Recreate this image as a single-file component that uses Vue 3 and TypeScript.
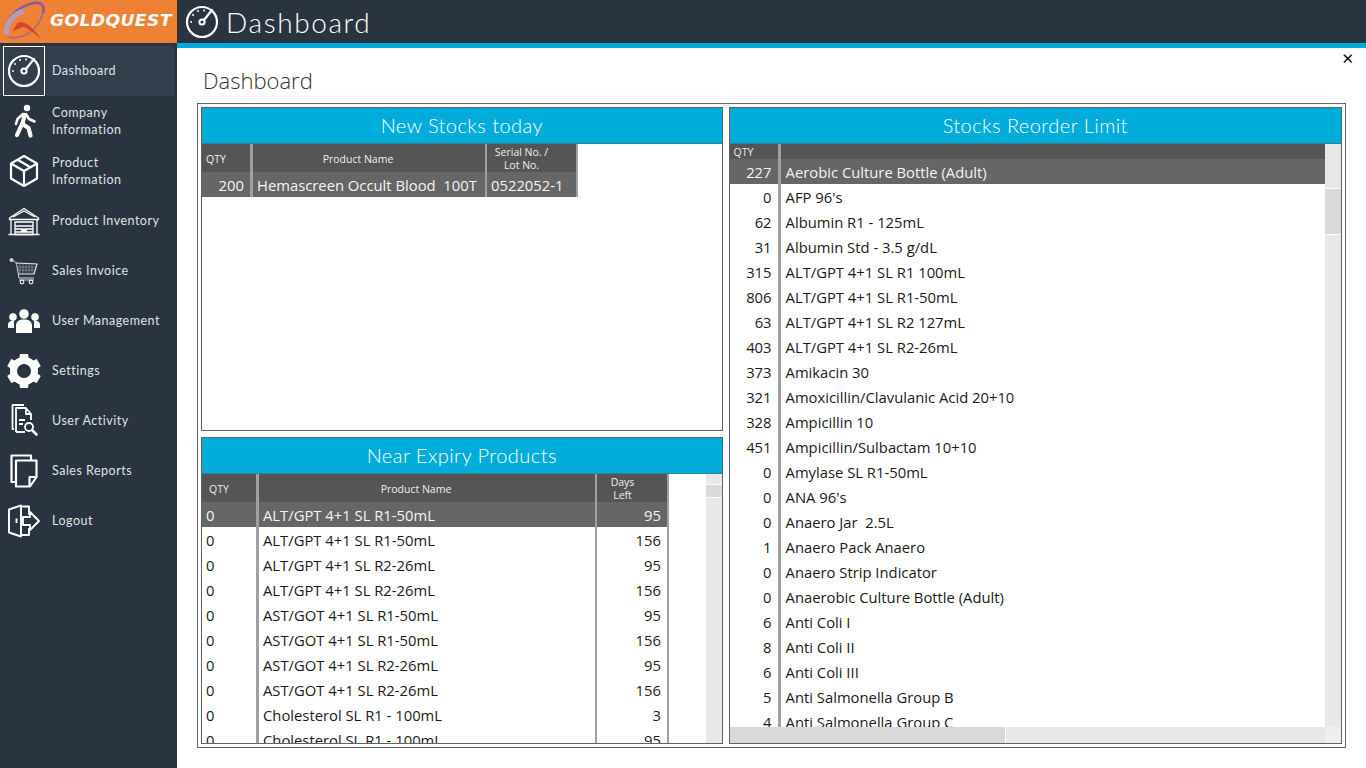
<template>
  <div class="app">
    <aside class="sidebar">
      <div class="logo">
        <svg class="logo-mark" viewBox="0 0 50 43">
          <path d="M7 35C1 24 16 6 34 3c8-1 11 3 9 10" fill="none" stroke="#8a5aa6" stroke-width="2.6" />
          <path d="M7 35C4 26 12 14 24 11" fill="none" stroke="#b79ab8" stroke-width="5" />
          <path d="M8 37c14 3 30-6 35-24" fill="none" stroke="#a56a8a" stroke-width="1.6" />
          <path d="M19 22c8 0 14 6 22 17-7-6-13-11-18-12-4 1-8 3-10 5 1-4 3-8 6-10z" fill="#d8452c" />
        </svg>
        <span class="logo-text">GOLDQUEST</span>
      </div>
      <nav class="menu">
        <div v-for="item in menu" :key="item.icon" class="menu-item" :class="{ active: item.icon === 'gauge' }">
          <svg class="menu-icon" viewBox="0 0 48 50" v-html="icons[item.icon]"></svg>
          <span class="menu-label" :class="{ single: !item.label.includes('\n') }">{{ item.label }}</span>
        </div>
      </nav>
    </aside>

    <div class="content">
      <header class="topbar">
        <svg class="top-icon" viewBox="0 0 48 50" v-html="icons.gauge"></svg>
        <span class="top-title">Dashboard</span>
      </header>

      <main class="main">
        <span class="close">✕</span>
        <h1 class="page-title">Dashboard</h1>
        <div class="frame">
          <div class="left-col">
            <section class="panel new-stocks">
              <div class="panel-head">New Stocks today</div>
              <div class="grid-wrap">
                <div class="grid">
                  <div class="row head">
                    <div class="cell c-qty tl">QTY</div>
                    <div class="cell c-name tc">Product Name</div>
                    <div class="cell c-lot tc">Serial No. /<br />Lot No.</div>
                  </div>
                  <div class="row selected">
                    <div class="cell c-qty tr">200</div>
                    <div class="cell c-name">{{ newStockName }}</div>
                    <div class="cell c-lot">0522052-1</div>
                  </div>
                </div>
              </div>
            </section>

            <section class="panel near-expiry">
              <div class="panel-head">Near Expiry Products</div>
              <div class="grid-wrap">
                <div class="grid">
                  <div class="row head">
                    <div class="cell c-qty tl">QTY</div>
                    <div class="cell c-name tc">Product Name</div>
                    <div class="cell c-days tc">Days<br />Left</div>
                  </div>
                  <div
                    v-for="(row, i) in nearExpiry"
                    :key="i"
                    class="row"
                    :class="{ selected: i === 0 }"
                  >
                    <div class="cell c-qty">0</div>
                    <div class="cell c-name">{{ row[0] }}</div>
                    <div class="cell c-days tr">{{ row[1] }}</div>
                  </div>
                </div>
                <div class="vscroll">
                  <div class="vthumb"></div>
                </div>
              </div>
            </section>
          </div>

          <section class="panel reorder">
            <div class="panel-head">Stocks Reorder Limit</div>
            <div class="grid-wrap">
              <div class="grid">
                <div class="row head">
                  <div class="cell c-qty tl">QTY</div>
                  <div class="cell c-name"></div>
                </div>
                <div
                  v-for="(row, i) in reorder"
                  :key="i"
                  class="row"
                  :class="{ selected: i === 0 }"
                >
                  <div class="cell c-qty tr">{{ row[0] }}</div>
                  <div class="cell c-name">{{ row[1] }}</div>
                </div>
              </div>
              <div class="vscroll">
                <div class="vthumb"></div>
              </div>
              <div class="hscroll">
                <div class="hthumb"></div>
              </div>
              <div class="corner"></div>
            </div>
          </section>
        </div>
      </main>
    </div>
  </div>
</template>

<script setup lang="ts">
const menu = [
  { icon: "gauge", label: "Dashboard" },
  { icon: "walker", label: "Company\nInformation" },
  { icon: "box", label: "Product\nInformation" },
  { icon: "garage", label: "Product Inventory" },
  { icon: "cart", label: "Sales Invoice" },
  { icon: "users", label: "User Management" },
  { icon: "gear", label: "Settings" },
  { icon: "activity", label: "User Activity" },
  { icon: "reports", label: "Sales Reports" },
  { icon: "logout", label: "Logout" },
];

// icons are drawn in the 48x50 box of a menu row
const icons: Record<string, string> = {
  gauge: `<g fill="none" stroke="#fff" stroke-linecap="round">
    <circle cx="24" cy="25" r="15" stroke-width="2.2"/>
    <circle cx="24" cy="25" r="2.6" stroke-width="2"/>
    <path d="M26 23l8-10" stroke-width="2.2"/>
    <path d="M13 25h.1M15 18h.1M20 14h.1M26 13.5h.1" stroke-width="1.8"/></g>`,
  walker: `<circle cx="27" cy="12" r="3.2" fill="#fff"/>
    <g fill="none" stroke="#fff" stroke-width="4.2" stroke-linecap="round" stroke-linejoin="round">
    <path d="M24.5 19l-2 9"/><path d="M22 28l-5 11"/><path d="M22.5 28l6 4 2 7.5"/></g>
    <g fill="none" stroke="#fff" stroke-width="2.6" stroke-linecap="round" stroke-linejoin="round">
    <path d="M23 18l-5.500 5-1.500 5"/><path d="M26 18l3 5 5.500 2.500"/></g>`,
  box: `<g fill="none" stroke="#fff" stroke-width="2.2" stroke-linejoin="round">
    <path d="M24 10l13 7.5v15L24 40l-13-7.5v-15z"/>
    <path d="M11 17.5L24 25l13-7.5M24 25v15M17.5 13.8l13 7.5"/></g>`,
  garage: `<g fill="none" stroke="#fff" stroke-width="1.3">
    <path d="M9.500 22L24 12.500 38.500 22v1.500H9.500z"/>
    <path d="M13 21l11-6 11 6"/>
    <path d="M11 23.500v15M37 23.500v15M8.500 38.500h31"/>
    <path d="M15 26h18v12.500H15z"/>
    <path d="M15 30h18M15 33h18M15 36h18M21 34.500h6"/></g>`,
  cart: `<g fill="none" stroke="#e8e8e8" stroke-width=".9" >
    <circle cx="11.500" cy="14" r="1.500" fill="#ccc"/>
    <path d="M13 14.500c3 1 3.500 3 4 6l2 11.500h15"/>
    <path d="M16 17l21 1-3 10H18" stroke-width="1.200"/>
    <path d="M20 18v10M23 18v10M26 18v10M29 18v10M32 18v10M17 21h19M18 24h17" stroke-width=".7" stroke="#99a"/>
    <circle cx="22" cy="36" r="1.800" stroke-width="1.200"/>
    <circle cx="31" cy="36" r="1.800" stroke-width="1.200"/>
    <path d="M19 34h15"/></g>`,
  users: `<g fill="#fff">
    <circle cx="24" cy="18" r="4.800"/><circle cx="13" cy="21" r="3.800"/><circle cx="35" cy="21" r="3.800"/>
    <path d="M16 37v-7c0-5 3-6.500 8-6.500s8 1.500 8 6.500v7z"/>
    <path d="M8 32v-3c0-3 2-4.500 6.500-4.500-1 1.300-0.500 2.500-0.500 5v2.500zM40 32v-3c0-3-2-4.500-6.500-4.500 1 1.300.5 2.500.5 5v2.500z"/></g>`,
  gear: `<g fill="#fff">
    <path d="M20 8h8l1 7h-10z"/>
    <path d="M20 8h8l1 7h-10z" transform="rotate(60 24 25)"/>
    <path d="M20 8h8l1 7h-10z" transform="rotate(120 24 25)"/>
    <path d="M20 8h8l1 7h-10z" transform="rotate(180 24 25)"/>
    <path d="M20 8h8l1 7h-10z" transform="rotate(240 24 25)"/>
    <path d="M20 8h8l1 7h-10z" transform="rotate(300 24 25)"/></g>
    <circle cx="24" cy="25" r="10.500" fill="none" stroke="#fff" stroke-width="7"/>`,
  activity: `<g fill="none" stroke="#fff" stroke-width="1.800" stroke-linejoin="round">
    <path d="M14 33h-1.500V9H24"/>
    <path d="M16 33V12h10l5 6v6"/>
    <path d="M26 12v6h5"/>
    <path d="M16 36h9"/><path d="M16 33v3"/>
    <path d="M19 24h6M19 28h4"/>
    <circle cx="29" cy="31" r="4"/>
    <path d="M32 34l4.500 4.500" stroke-width="2.600" stroke-linecap="round"/></g>`,
  reports: `<g fill="none" stroke="#fff" stroke-width="2.200" stroke-linejoin="round">
    <path d="M16 36h-4.500V9.500H31V14"/>
    <path d="M16 14.500h20.500V31L30 40.500H16z"/>
    <path d="M36 31h-6.500v9"/></g>`,
  logout: `<g fill="none" stroke="#fff" stroke-width="1.900" stroke-linejoin="round">
    <path d="M9 13.500L21 9.500v31L9 36.500z"/>
    <path d="M21 10.500h8v8M29 32v7h-8"/>
    <path d="M16.500 22.500v4.500"/>
    <path d="M23 21h7v-5l9 9-9 9v-5h-7z"/></g>`,
};

const newStockName = "Hemascreen Occult Blood  100T";

const nearExpiry: [string, number][] = [
  ["ALT/GPT 4+1 SL R1-50mL", 95],
  ["ALT/GPT 4+1 SL R1-50mL", 156],
  ["ALT/GPT 4+1 SL R2-26mL", 95],
  ["ALT/GPT 4+1 SL R2-26mL", 156],
  ["AST/GOT 4+1 SL R1-50mL", 95],
  ["AST/GOT 4+1 SL R1-50mL", 156],
  ["AST/GOT 4+1 SL R2-26mL", 95],
  ["AST/GOT 4+1 SL R2-26mL", 156],
  ["Cholesterol SL R1 - 100mL", 3],
  ["Cholesterol SL R1 - 100mL", 95],
];

const reorder: [number, string][] = [
  [227, "Aerobic Culture Bottle (Adult)"],
  [0, "AFP 96's"],
  [62, "Albumin R1 - 125mL"],
  [31, "Albumin Std - 3.5 g/dL"],
  [315, "ALT/GPT 4+1 SL R1 100mL"],
  [806, "ALT/GPT 4+1 SL R1-50mL"],
  [63, "ALT/GPT 4+1 SL R2 127mL"],
  [403, "ALT/GPT 4+1 SL R2-26mL"],
  [373, "Amikacin 30"],
  [321, "Amoxicillin/Clavulanic Acid 20+10"],
  [328, "Ampicillin 10"],
  [451, "Ampicillin/Sulbactam 10+10"],
  [0, "Amylase SL R1-50mL"],
  [0, "ANA 96's"],
  [0, "Anaero Jar  2.5L"],
  [1, "Anaero Pack Anaero"],
  [0, "Anaero Strip Indicator"],
  [0, "Anaerobic Culture Bottle (Adult)"],
  [6, "Anti Coli I"],
  [8, "Anti Coli II"],
  [6, "Anti Coli III"],
  [5, "Anti Salmonella Group B"],
  [4, "Anti Salmonella Group C"],
];
</script>

<style scoped>
.app {
  display: flex;
  width: 1366px;
  height: 768px;
  overflow: hidden;
  background: #fff;
  font-family: "Open Sans", "Noto Sans", sans-serif;
}

.sidebar {
  width: 177px;
  flex-shrink: 0;
  background: #2a3440;
}

.logo {
  display: flex;
  align-items: center;
  height: 43px;
  background: #ee8133;
}

.logo-mark {
  width: 50px;
  height: 43px;
  flex-shrink: 0;
}

.logo-text {
  display: inline-block;
  margin-top: -2px;
  font-family: "DejaVu Sans", sans-serif;
  font-weight: 700;
  font-style: italic;
  font-size: 15px;
  color: #fff;
  letter-spacing: 0.3px;
  transform: scaleX(1.15);
  transform-origin: left center;
}

.menu {
  padding-top: 3px;
}

.menu-item {
  position: relative;
  display: flex;
  align-items: center;
  height: 50px;
  margin-right: 3px;
  color: #dfe2e5;
  font-family: Lato, sans-serif;
  font-size: 12.5px;
  line-height: 17px;
  letter-spacing: 0.5px;
}

.menu-item.active {
  background: #333e4d;
}

.menu-item.active::before {
  content: "";
  position: absolute;
  left: 3px;
  top: 0;
  width: 40px;
  height: 48px;
  border: 1px solid #fff;
}

.menu-icon {
  width: 48px;
  height: 50px;
  flex-shrink: 0;
  margin-right: 4px;
}

.menu-label {
  white-space: pre-line;
}

.menu-label.single {
  margin-top: -2px;
}

.content {
  flex: 1;
  min-width: 0;
  display: flex;
  flex-direction: column;
}

.topbar {
  display: flex;
  align-items: center;
  height: 43px;
  background: #2a3440;
  border-bottom: 5px solid #00acd9;
  box-sizing: content-box;
}

.top-icon {
  width: 48px;
  height: 50px;
  margin-left: 1px;
  flex-shrink: 0;
}

.top-title {
  font-family: Lato, sans-serif;
  font-weight: 300;
  font-size: 28px;
  color: #fff;
  letter-spacing: 1.6px;
}

.main {
  position: relative;
  flex: 1;
  min-height: 0;
  padding-left: 20px;
}

.close {
  position: absolute;
  right: 12px;
  top: 2px;
  font-size: 15px;
  line-height: 18px;
  color: #111;
  font-weight: 700;
  font-family: "DejaVu Sans", sans-serif;
}

.page-title {
  margin: 0;
  height: 55px;
  padding: 15px 0 0 6px;
  box-sizing: border-box;
  font-size: 22px;
  line-height: 34px;
  font-weight: 300;
  color: #333;
}

.frame {
  display: flex;
  gap: 6px;
  width: 1149px;
  height: 645px;
  box-sizing: border-box;
  padding: 3px;
  border: 1px solid #666;
}

.left-col {
  display: flex;
  flex-direction: column;
  gap: 6px;
  width: 522px;
}

.panel {
  display: flex;
  flex-direction: column;
  box-sizing: border-box;
  border: 1px solid #5f6468;
  min-height: 0;
}

.new-stocks {
  height: 324px;
}

.near-expiry {
  height: 307px;
}

.reorder {
  width: 614px;
  height: 637px;
}

.panel-head {
  flex-shrink: 0;
  height: 35px;
  line-height: 35px;
  text-align: center;
  background: #00acd9;
  color: #fff;
  font-family: Lato, sans-serif;
  font-weight: 300;
  font-size: 20px;
  letter-spacing: 0.45px;
  border-bottom: 1px solid #33808f;
  box-sizing: content-box;
}

.grid-wrap {
  position: relative;
  flex: 1;
  min-height: 0;
  overflow: hidden;
}

.grid {
  overflow: hidden;
  height: 100%;
}

.row {
  display: flex;
  height: 25px;
  color: #1a1a1a;
  font-size: 14.8px;
  line-height: 26px;
}

.row.selected {
  background: #666;
  color: #f4f4f4;
}

.row.head {
  height: 28px;
  background: #555;
  color: #eee;
  font-size: 10.5px;
  font-weight: 500;
  line-height: 13px;
  align-items: stretch;
}

.cell {
  box-sizing: border-box;
  padding: 0 4px;
  white-space: pre;
  overflow: hidden;
  border-right: 3px solid #a0a0a0;
}

.head .cell {
  display: flex;
  align-items: center;
  white-space: normal;
  padding-top: 2px;
}

.tl {
  text-align: left;
}

.tc {
  text-align: center;
  justify-content: center;
}

.tr {
  text-align: right;
}

/* column widths differ per panel */
.new-stocks .row {
  width: 376px;
}

.new-stocks .c-qty {
  width: 51px;
  padding-right: 6px;
}

.new-stocks .c-name {
  width: 234px;
  border-right-width: 2px;
}

.new-stocks .c-lot {
  width: 91px;
  border-right-width: 2px;
}

.new-stocks .head .c-name,
.near-expiry .head .c-name {
  padding-right: 26px;
}

.new-stocks .head .c-lot {
  flex-direction: column;
  padding: 1px 20px 0 0;
}

.near-expiry .row {
  width: 467px;
}

.near-expiry .c-qty {
  width: 57px;
}

.near-expiry .head .c-qty {
  padding-left: 7px;
}

.near-expiry .c-name {
  width: 338px;
  border-right-width: 2px;
}

.near-expiry .c-days {
  width: 72px;
  padding-right: 6px;
  border-right-width: 2px;
}

.near-expiry .head .c-days {
  flex-direction: column;
  padding: 1px 19px 0 0;
}

.reorder .c-qty {
  width: 51px;
  padding-right: 6px;
}

.reorder .c-name {
  flex: 1;
  padding-left: 5px;
  border-right: none;
}

.reorder .grid {
  padding-right: 16px;
  padding-bottom: 16px;
  box-sizing: border-box;
}

.reorder .row.head {
  height: 15px;
  line-height: 15px;
}

.near-expiry .vthumb {
  margin-top: 10px;
  height: 12px;
}

.vscroll {
  position: absolute;
  top: 0;
  right: 0;
  bottom: 0;
  width: 16px;
  background: #e8e8e8;
}

.vthumb {
  margin-top: 44px;
  height: 45px;
  background: #d9d9d9;
  border-top: 1px solid #fff;
  border-bottom: 1px solid #fff;
}

.reorder .vscroll {
  bottom: 16px;
}

.hscroll {
  position: absolute;
  left: 0;
  right: 16px;
  bottom: 0;
  height: 16px;
  background: #e8e8e8;
}

.hthumb {
  width: 275px;
  height: 16px;
  background: #d9d9d9;
  border-right: 1px solid #fff;
}

.corner {
  position: absolute;
  right: 0;
  bottom: 0;
  width: 16px;
  height: 16px;
  background: #efefef;
}
</style>
